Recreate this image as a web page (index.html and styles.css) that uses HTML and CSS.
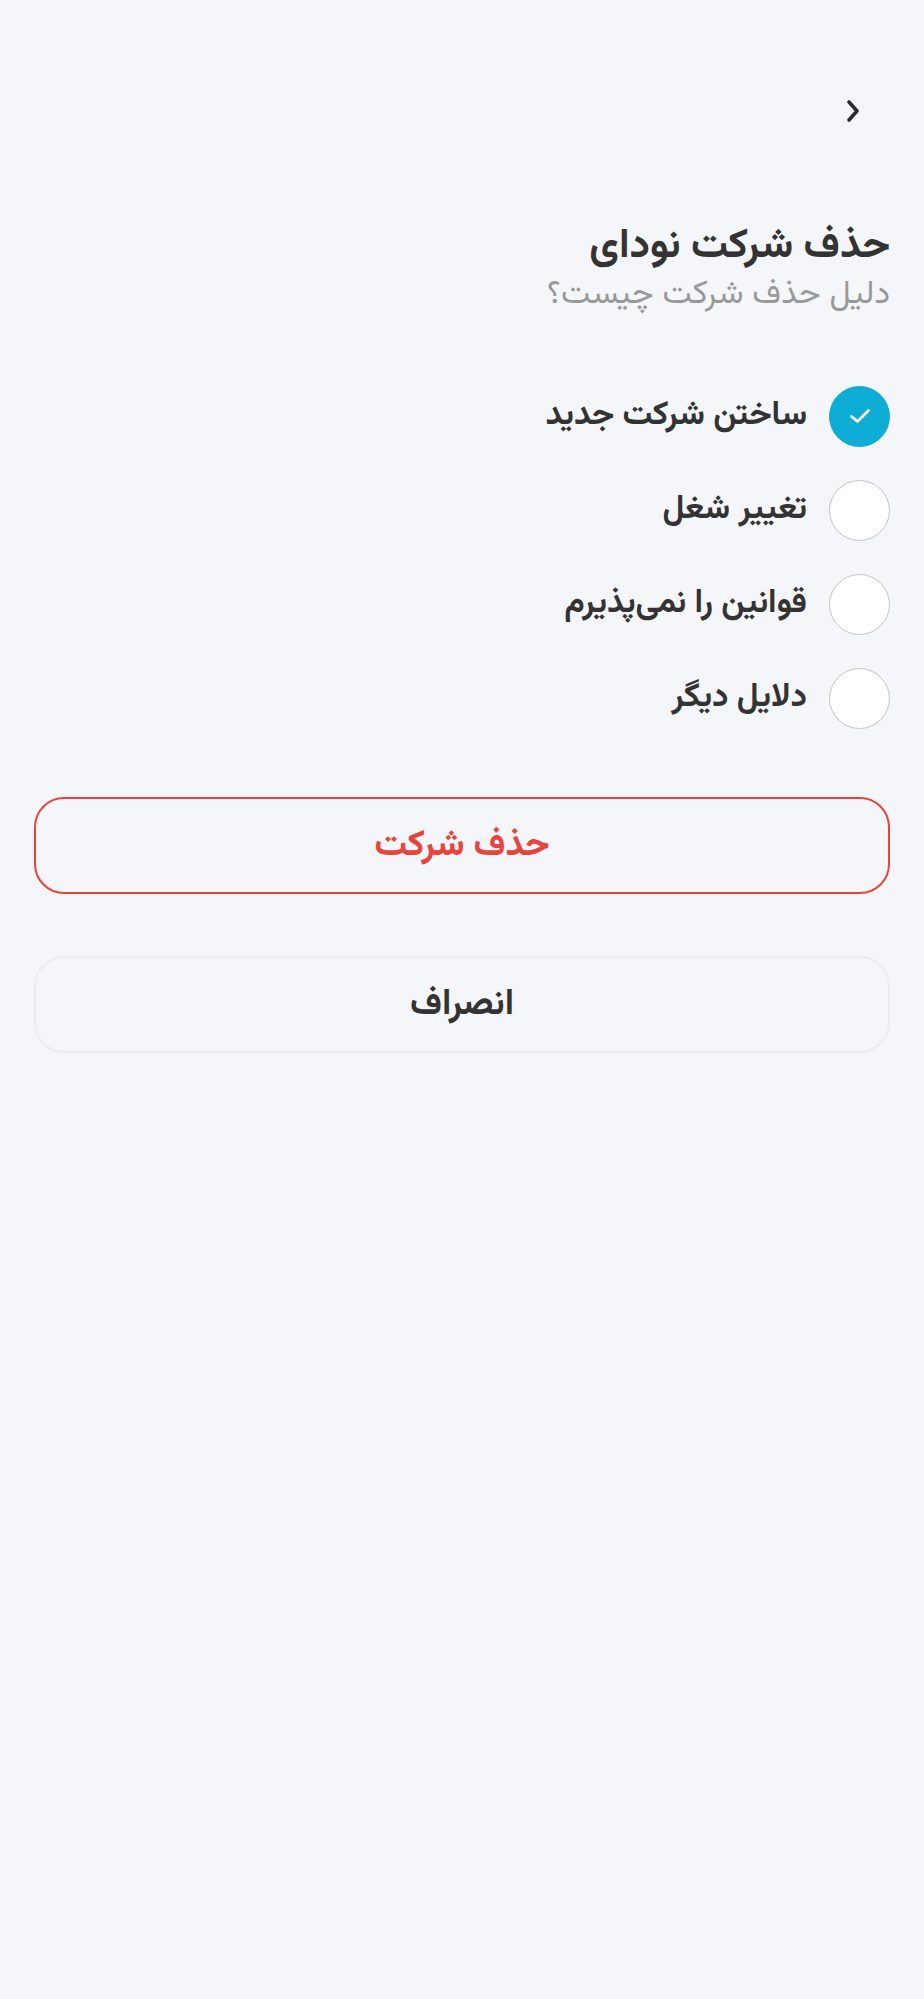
FILE: index.html
```html
<!DOCTYPE html>
<html lang="fa" dir="rtl">
<head>
    <meta charset="UTF-8">
    <meta name="viewport" content="width=device-width, initial-scale=1.0">
    <title>حذف شرکت</title>
    <link rel="stylesheet" href="styles.css">
</head>
<body>

    <div class="page">
        <!-- top bar with back button -->
        <header class="topbar">
            <button class="back-btn" aria-label="بازگشت">
                <svg width="18" height="26" viewBox="0 0 18 26">
                    <path d="M5 4 L13 13 L5 22" fill="none" stroke="#2b2b2b" stroke-width="3.6" stroke-linecap="round" stroke-linejoin="round"/>
                </svg>
            </button>
        </header>

        <div class="intro">
            <h1 class="title">حذف شرکت نودای</h1>
            <p class="subtitle">دلیل حذف شرکت چیست؟</p>
        </div>

        <!-- reasons -->
        <ul class="reasons">
            <li class="reason checked">
                <span class="radio">
                    <svg width="24" height="24" viewBox="0 0 24 24">
                        <path d="M3.5 12.5 L9.5 17.5 L20.5 6.5" fill="none" stroke="#fff" stroke-width="2.8" stroke-linecap="round" stroke-linejoin="round"/>
                    </svg>
                </span>
                <span class="reason-text">ساختن شرکت جدید</span>
            </li>
            <li class="reason">
                <span class="radio"></span>
                <span class="reason-text">تغییر شغل</span>
            </li>
            <li class="reason">
                <span class="radio"></span>
                <span class="reason-text">قوانین را نمی‌پذیرم</span>
            </li>
            <li class="reason">
                <span class="radio"></span>
                <span class="reason-text">دلایل دیگر</span>
            </li>
        </ul>

        <div class="actions">
            <button class="btn btn-delete">حذف شرکت</button>
            <button class="btn btn-cancel">انصراف</button>
        </div>
    </div>

</body>
</html>
```

FILE: styles.css
```css
body {
    margin: 0;
    padding: 0;
    background-color: #f5f6fa;
    font-family: 'Vazirmatn', 'Noto Sans Arabic', 'DejaVu Sans', sans-serif;
    color: #333;
    direction: rtl;
}

.page {
    padding: 0 34px;
}

.topbar {
    display: flex;
    padding-top: 86px;
    padding-right: 12px;
}

.back-btn {
    width: 50px;
    height: 50px;
    border: none;
    background: none;
    padding: 0;
    display: flex;
    align-items: center;
    justify-content: center;
    cursor: pointer;
}

.intro {
    margin-top: 84px;
}

.title {
    margin: 0;
    font-size: 41px;
    font-weight: bold;
    line-height: 54px;
    color: #333;
}

.subtitle {
    margin: 0;
    font-size: 33px;
    line-height: 42px;
    color: #999;
}

.reasons {
    list-style: none;
    margin: 53px 0 0;
    padding: 0;
}

.reason {
    display: flex;
    align-items: center;
    gap: 22px;
    height: 94px;
}

.radio {
    width: 59px;
    height: 59px;
    border-radius: 50%;
    border: 1.5px solid #c4c4c4;
    background-color: #fff;
    display: flex;
    align-items: center;
    justify-content: center;
    flex-shrink: 0;
}

.reason.checked .radio {
    background-color: #0eadd6;
    border-color: #0eadd6;
}

.reason-text {
    font-size: 33px;
    font-weight: bold;
    color: #333;
}

.actions {
    margin-top: 52px;
    display: flex;
    flex-direction: column;
    gap: 62px;
}

.btn {
    display: block;
    width: 100%;
    height: 97px;
    border-radius: 30px;
    background: transparent;
    font-family: inherit;
    font-size: 36px;
    font-weight: bold;
    cursor: pointer;
}

.btn-delete {
    border: 2px solid #e9443b;
    color: #e9443b;
}

.btn-cancel {
    border: 2px solid #ebecef;
    color: #333;
}
```
